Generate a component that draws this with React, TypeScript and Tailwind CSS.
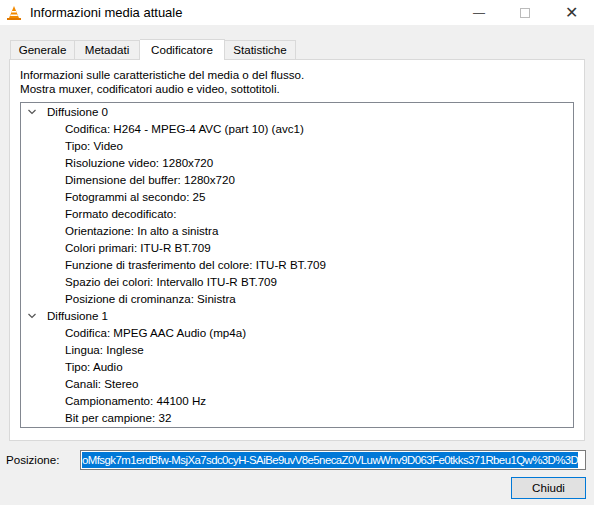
import React from "react";

const Chev = () => (
  <svg width="10" height="10" viewBox="0 0 10 10" className="mr-[10px]"><path d="M1.5 3 L5 6.5 L8.5 3" fill="none" stroke="#555" strokeWidth="1.2"/></svg>
);

export default function App() {
  const s0 = ["Codifica: H264 - MPEG-4 AVC (part 10) (avc1)","Tipo: Video","Risoluzione video: 1280x720","Dimensione del buffer: 1280x720","Fotogrammi al secondo: 25","Formato decodificato:","Orientazione: In alto a sinistra","Colori primari: ITU-R BT.709","Funzione di trasferimento del colore: ITU-R BT.709","Spazio dei colori: Intervallo ITU-R BT.709","Posizione di crominanza: Sinistra"];
  const s1 = ["Codifica: MPEG AAC Audio (mp4a)","Lingua: Inglese","Tipo: Audio","Canali: Stereo","Campionamento: 44100 Hz","Bit per campione: 32"];
  const row = "h-[17px] flex items-center";
  return (
    <div className="w-[594px] h-[505px] bg-[#f0f0f0] text-[11.6px] text-black flex flex-col" style={{fontFamily:'"Liberation Sans", sans-serif'}}>
      <div className="h-[25px] bg-white flex items-center shrink-0 text-[12px]">
        <svg width="16" height="16" viewBox="0 0 16 16" className="ml-[6px] mr-[8px]">
          <path d="M8 1 L13 13 H3 Z" fill="#f28a00"/>
          <path d="M6 6 H10 L10.6 7.6 H5.4 Z M4.7 9.5 H11.3 L11.9 11 H4.1 Z" fill="#fff"/>
          <rect x="1" y="13" width="14" height="2" fill="#e07800"/>
        </svg>
        <span className="text-[13px]">Informazioni media attuale</span>
        <div className="flex-1"/>
        <span className="w-[46px] text-center text-[#555]">—</span>
        <span className="w-[46px] flex justify-center"><span className="w-[10px] h-[10px] border border-[#bbb]"/></span>
        <span className="w-[46px] text-center text-[16px] text-[#333]">✕</span>
      </div>
      <div className="px-[9px] pt-[14px] flex flex-col">
        <div className="flex items-end h-[20px] pl-[1px]">
          <div className="h-[19px] w-[65px] border border-[#d9d9d9] border-b-0 bg-[#f0f0f0] flex items-center justify-center">Generale</div>
          <div className="h-[19px] w-[65px] border border-[#d9d9d9] border-l-0 border-b-0 bg-[#f0f0f0] flex items-center justify-center">Metadati</div>
          <div className="h-[21px] w-[85px] border border-[#d9d9d9] border-l-0 border-b-0 bg-white flex items-center justify-center relative top-[1px] z-10">Codificatore</div>
          <div className="h-[19px] w-[71px] border border-[#d9d9d9] border-l-0 border-b-0 bg-[#f0f0f0] flex items-center justify-center">Statistiche</div>
        </div>
        <div className="h-[382px] bg-white border border-[#d9d9d9] px-[10px] pt-[8px]">
          <div className="leading-[14px]">Informazioni sulle caratteristiche del media o del flusso.<br/>Mostra muxer, codificatori audio e video, sottotitoli.</div>
          <div className="mt-[6px] h-[326px] border border-[#828790] pl-[6px]">
            <div className={row}><Chev/>Diffusione 0</div>
            {s0.map(t => <div key={t} className={row + " pl-[38px]"}>{t}</div>)}
            <div className={row}><Chev/>Diffusione 1</div>
            {s1.map(t => <div key={t} className={row + " pl-[38px]"}>{t}</div>)}
          </div>
        </div>
      </div>
      <div className="flex items-center mt-[9px] pl-[6px] pr-[8px]">
        <span className="w-[74px]">Posizione:</span>
        <div className="flex-1 h-[20px] border border-[#7a7a7a] bg-white flex items-center px-[1px] overflow-hidden">
          <span className="bg-[#0078d7] text-white whitespace-nowrap h-[16px] leading-[16px] text-[11.4px] tracking-[-0.55px]">oMfsgk7m1erdBfw-MsjXa7sdc0cyH-SAiBe9uvV8e5necaZ0VLuwWnv9D063Fe0tkks371Rbeu1Qw%3D%3D</span>
        </div>
      </div>
      <div className="flex justify-end pr-[8px] mt-[7px]">
        <div className="w-[75px] h-[22px] border border-[#0078d7] bg-[#e1e1e1] flex items-center justify-center">Chiudi</div>
      </div>
    </div>
  );
}
